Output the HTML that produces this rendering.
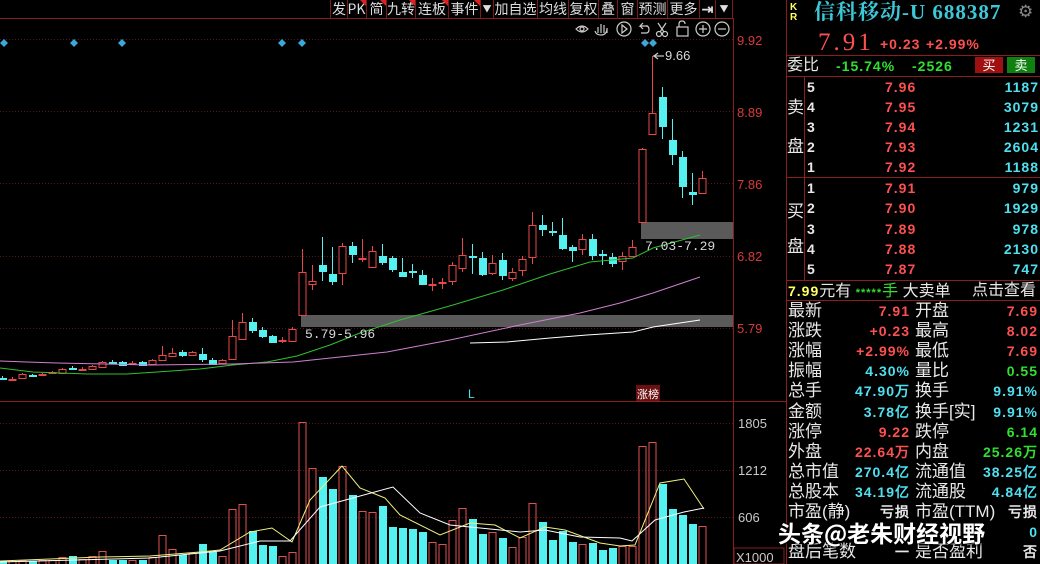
<!DOCTYPE html>
<html><head><meta charset="utf-8">
<style>
html,body{margin:0;padding:0;background:#000;width:1040px;height:564px;overflow:hidden;font-family:"Liberation Sans","Noto Sans CJK SC",sans-serif;}
#wrap{position:relative;width:1040px;height:564px;}
svg{position:absolute;left:0;top:0;}
.t{position:absolute;white-space:nowrap;line-height:1;}
.tb{position:absolute;top:0;height:18px;border-right:1px solid #7a1a1a;color:#ddd;font-size:14px;line-height:18px;text-align:center;font-family:"Noto Sans CJK SC",sans-serif;overflow:hidden}
.tri{position:absolute;top:0;right:0;width:0;height:0;border-top:6px solid #e02020;border-left:6px solid transparent;}
.r{color:#ff5050}.c{color:#4fe0f0}.g{color:#30e030}.w{color:#e8e8e8}.y{color:#ffff60}
.rp{position:absolute;font-size:15px;line-height:20px;font-family:"Liberation Sans","Noto Sans CJK SC",sans-serif;white-space:nowrap}
.num{font-family:"Liberation Sans",sans-serif;font-weight:bold;font-size:14px;letter-spacing:1px}
</style></head><body><div id="wrap">
<svg id="s" width="1040" height="564" xmlns="http://www.w3.org/2000/svg">
<g stroke="#5a1515" stroke-dasharray="1,2" stroke-width="1">
<line x1="0" y1="39.5" x2="733" y2="39.5"/>
<line x1="0" y1="111.5" x2="733" y2="111.5"/>
<line x1="0" y1="183.5" x2="733" y2="183.5"/>
<line x1="0" y1="256.5" x2="733" y2="256.5"/>
<line x1="0" y1="328.5" x2="733" y2="328.5"/>
<line x1="0" y1="423.5" x2="733" y2="423.5"/>
<line x1="0" y1="470.5" x2="733" y2="470.5"/>
<line x1="0" y1="517.5" x2="733" y2="517.5"/>
</g>
<g stroke="#8a1e1e" stroke-width="1">
<line x1="0" y1="18.5" x2="330" y2="18.5"/>
<line x1="330" y1="18.5" x2="733" y2="18.5"/>
<line x1="733.5" y1="18" x2="733.5" y2="564"/>
<line x1="0" y1="401.5" x2="786" y2="401.5"/>
<line x1="786.5" y1="0" x2="786.5" y2="564"/>
</g>
<rect x="301" y="315" width="432" height="12" fill="#5a5a5a"/>
<rect x="641" y="222" width="92" height="17" fill="#5a5a5a"/>
<g id="cand"></g>
<polyline fill="none" stroke="#30c030" stroke-width="1" points="0,368 33,372 87,374 127,374 157,372 200,369 233,365 267,362 297,356 330,345 360,333 400,320 453,305 503,290 550,274 590,262 633,258 653,248 700,235"/>
<polyline fill="none" stroke="#d080d0" stroke-width="1" points="0,361 27,362 57,363 150,365 233,364 293,362 340,357 387,352 450,340 520,325 580,313 620,303 653,293 700,277"/>
<polyline fill="none" stroke="#ffffff" stroke-width="1" points="470,343 507,342 550,338 587,335 633,332 653,327 700,320"/>
<g id="vol"></g>
<polyline fill="none" stroke="#f0f080" stroke-width="1" points="0,561 100,557 150,556 200,552 220,550 250,532 272,528 292,542 310,500 342,466 360,488 385,498 400,515 440,535 470,523 495,525 520,538 545,527 565,530 600,543 620,546 635,545 660,483 684,479 704,509"/>
<polyline fill="none" stroke="#ffffff" stroke-width="1" points="0,562 150,558 220,551 260,541 290,541 320,507 393,487 420,513 450,525 480,528 520,532 545,530 580,537 620,538 632,541 655,520 684,512 704,508"/>
<g fill="#3aa8d8">
<path d="M4 39l4 4-4 4-4-4z"/><path d="M74 39l4 4-4 4-4-4z"/><path d="M122 39l4 4-4 4-4-4z"/><path d="M282 39l4 4-4 4-4-4z"/><path d="M302 39l4 4-4 4-4-4z"/><path d="M645 39l4 4-4 4-4-4z"/><path d="M653 39l4 4-4 4-4-4z"/>
</g>
<g stroke="#ccc" fill="none" stroke-width="1.2">
<line x1="653" y1="56" x2="664" y2="56"/><path d="M658 53l-4 3 4 3"/>
<path d="M576 29q6-6 12 0q-6 6-12 0z"/><circle cx="582" cy="29" r="2"/>
<path d="M598 33v-6m3 6v-9m3 9v-8m3 8v-5q0 7-6 7q-5 0-6-4"/>
<circle cx="624" cy="29" r="7"/><path d="M622 25l5 4-5 4z"/>
<path d="M648 26h-8l3-3m-3 3l3 3"/><path d="M641 33h5q3 0 3-3.5t-3-3.5"/>
<circle cx="659" cy="34" r="2.5"/><circle cx="665" cy="34" r="2.5"/><path d="M660 32l6-9M664 32l-6-9"/>
<rect x="677" y="27" width="11" height="9"/><path d="M679 27v-3q0-3 3-3t3 3"/>
<circle cx="703" cy="29" r="7"/><path d="M699 29h8M703 25v8"/>
<circle cx="722" cy="29" r="7"/><path d="M718 29h8"/>
</g>
<g fill="#d83a3a" font-family="Liberation Sans" font-size="13">
<text x="737" y="45">9.92</text><text x="737" y="117">8.89</text><text x="737" y="189">7.86</text><text x="737" y="261">6.82</text><text x="737" y="333">5.79</text>
</g>
<g fill="#c8c8c8" font-family="Liberation Sans" font-size="13">
<text x="738" y="428">1805</text><text x="738" y="475">1212</text><text x="738" y="522">606</text><text x="736" y="562">X1000</text>
</g>
<rect x="734" y="548" width="50" height="16" fill="none" stroke="#8a1e1e"/>
<g fill="#d8d8d8" font-family="Liberation Mono" font-size="13">
<text x="305" y="338">5.79-5.96</text><text x="645" y="250">7.03-7.29</text><text x="665" y="60" font-family="Liberation Sans">9.66</text>
</g>
<text x="468" y="398" fill="#4fe0f0" font-family="Liberation Sans" font-size="12">L</text>
<rect x="636" y="385" width="24" height="16" fill="#6a1010"/>
<text x="637" y="398" fill="#fff" font-family="Noto Sans CJK SC" font-size="11">涨榜</text>
</svg>

<div class="tb" style="left:330px;width:16px;border-left:1px solid #7a1a1a">发</div>
<div class="tb" style="left:347px;width:19px">PK<i class="tri"></i></div>
<div class="tb" style="left:367px;width:19px">简<i class="tri"></i></div>
<div class="tb" style="left:387px;width:28px">九转<i class="tri"></i></div>
<div class="tb" style="left:416px;width:32px">连板<i class="tri"></i></div>
<div class="tb" style="left:449px;width:31px">事件<i class="tri"></i></div>
<div class="tb" style="left:481px;width:12px;font-size:9px">▼</div>
<div class="tb" style="left:494px;width:43px">加自选</div>
<div class="tb" style="left:538px;width:30px">均线</div>
<div class="tb" style="left:569px;width:29px">复权</div>
<div class="tb" style="left:599px;width:18px">叠</div>
<div class="tb" style="left:618px;width:19px">窗</div>
<div class="tb" style="left:638px;width:29px">预测</div>
<div class="tb" style="left:668px;width:31px">更多</div>
<div class="tb" style="left:700px;width:15px;font-weight:bold">⇥</div>
<div class="tb" style="left:716px;width:16px;font-size:9px">▼</div>

<div class="t y" style="left:790px;top:3px;font-size:10px;font-weight:bold;line-height:10px">K<br>R</div>
<div class="t" style="left:814px;top:2px;font-size:21px;font-weight:bold;letter-spacing:1px;color:#3cc8d8;font-family:'Liberation Serif','Noto Serif CJK SC',serif">信科移动-U 688387</div>
<div class="t" style="left:1018px;top:3px;font-size:17px;color:#888">⚙</div>
<div class="t r" style="left:818px;top:30px;font-size:25px;font-family:'Liberation Serif',serif;letter-spacing:3px">7.91</div>
<div class="t r num" style="left:880px;top:37px;font-size:14px">+0.23</div>
<div class="t r num" style="left:926px;top:37px;font-size:14px">+2.99%</div>
<div style="position:absolute;left:787px;top:55px;width:253px;height:1px;background:#8a1e1e"></div>
<div class="rp w" style="left:787px;top:56px;font-size:16px">委比</div>
<div class="rp g num" style="left:836px;top:56px">-15.74%</div>
<div class="rp g num" style="left:912px;top:56px">-2526</div>
<div class="t" style="left:975px;top:57px;width:28px;height:16px;background:#a01010;color:#fff;font-size:13px;line-height:16px;text-align:center;font-family:'Noto Sans CJK SC'">买</div>
<div class="t" style="left:1007px;top:57px;width:28px;height:16px;background:#108010;color:#fff;font-size:13px;line-height:16px;text-align:center;font-family:'Noto Sans CJK SC'">卖</div>
<div style="position:absolute;left:787px;top:76px;width:253px;height:1px;background:#8a1e1e"></div>
<div style="position:absolute;left:804px;top:77px;width:1px;height:203px;background:#8a1e1e"></div>
<div style="position:absolute;left:787px;top:177px;width:253px;height:1px;background:#8a1e1e"></div>
<div style="position:absolute;left:787px;top:280px;width:253px;height:1px;background:#8a1e1e"></div>
<div style="position:absolute;left:787px;top:300px;width:253px;height:1px;background:#8a1e1e"></div>
<div class="rp w" style="left:787px;top:98px;font-size:17px">卖</div>
<div class="rp w" style="left:787px;top:137px;font-size:17px">盘</div>
<div class="rp w" style="left:787px;top:202px;font-size:17px">买</div>
<div class="rp w" style="left:787px;top:237px;font-size:17px">盘</div>
<div id="ob"></div>
<div class="rp" style="left:788px;top:281px;font-size:16px"><span class="y num">7.99</span><span class="w">元有</span> <span class="g num" style="font-size:11px">*****</span><span class="g">手</span> <span class="w">大卖单</span></div>
<div class="rp w" style="left:972px;top:281px;font-size:16px">点击查看</div>
<div id="st"></div>
<div class="t" style="left:778px;top:521px;font-size:23px;font-weight:bold;color:#fff;font-family:'Noto Sans CJK SC',sans-serif;text-shadow:0 0 3px #000,1px 1px 2px #000">头条@老朱财经视野</div>
</div>
<script>
var NS="http://www.w3.org/2000/svg";
function el(p,t,a){var e=document.createElementNS(NS,t);for(var k in a)e.setAttribute(k,a[k]);p.appendChild(e);return e;}
var C=[[2,378,378,376,380,'c'],[12,379,379,377,381,'r'],[22,374,378,373,379,'r'],[32,375,375,374,376,'c'],[42,374,375,373,376,'r'],[52,372,373,371,374,'r'],[62,369,373,368,374,'r'],[72,368,368,366,370,'c'],[82,369,369,367,371,'r'],[92,366,369,365,370,'r'],[102,362,367,361,368,'r'],[112,362,362,360,364,'c'],[122,362,365,361,366,'c'],[132,363,363,361,365,'r'],[142,362,365,361,366,'c'],[152,360,364,359,365,'r'],[162,355,360,346,361,'r'],[172,353,356,348,357,'r'],[182,352,355,350,357,'c'],[192,352,355,351,356,'r'],[202,354,359,348,362,'c'],[212,360,364,358,365,'c'],[222,360,363,359,364,'r'],[232,336,359,320,360,'r'],[242,322,339,313,340,'r'],[252,322,330,318,333,'c'],[262,330,336,327,338,'c'],[272,336,342,335,343,'c'],[282,340,340,337,343,'r'],[292,329,341,327,342,'r'],[302,272,315,249,316,'r'],[312,281,284,265,290,'r'],[322,265,271,237,281,'c'],[332,274,281,247,285,'c'],[342,246,273,243,285,'r'],[352,246,254,242,263,'c'],[362,258,258,239,262,'r'],[372,251,267,246,268,'r'],[382,256,262,244,265,'c'],[392,258,269,256,272,'c'],[402,272,276,258,277,'c'],[412,271,271,264,278,'c'],[422,275,284,270,285,'c'],[432,284,284,278,291,'r'],[442,282,282,278,289,'r'],[452,265,281,262,285,'r'],[462,255,268,238,272,'r'],[472,256,256,244,274,'c'],[482,258,274,252,276,'c'],[492,263,273,255,275,'r'],[502,260,275,253,280,'c'],[512,272,278,268,281,'r'],[522,259,270,256,276,'r'],[532,225,257,212,264,'r'],[542,225,229,215,236,'c'],[552,231,231,222,236,'c'],[562,235,248,218,250,'c'],[572,247,250,245,262,'c'],[582,239,249,234,255,'r'],[592,239,255,234,260,'c'],[602,254,254,250,265,'c'],[612,257,263,253,267,'c'],[622,256,261,252,270,'r'],[632,247,256,240,257,'r'],[642,149,222,148,223,'r'],[652,113,134,56,135,'r'],[662,97,126,87,139,'c'],[672,140,154,119,165,'c'],[682,157,186,151,198,'c'],[692,192,194,173,205,'c'],[702,178,193,171,194,'r']];
var g=document.getElementById('cand');
C.forEach(function(d){var x=d[0],col=d[5]=='r'?'#e84848':'#55f0f0';
 el(g,'line',{x1:x+.5,x2:x+.5,y1:d[3],y2:d[4],stroke:col});
 var h=Math.max(1,d[2]-d[1]);
 if(d[5]=='r')el(g,'rect',{x:x-3,y:d[1]+.5,width:7,height:h,fill:'#000',stroke:col});
 else el(g,'rect',{x:x-3,y:d[1],width:8,height:h+1,fill:col});
});
var V=[[2,561,'c'],[12,561,'r'],[22,560,'r'],[32,561,'c'],[42,560,'r'],[52,560,'r'],[62,557,'r'],[72,556,'c'],[82,559,'r'],[92,556,'r'],[102,551,'r'],[112,560,'c'],[122,560,'c'],[132,560,'r'],[142,560,'c'],[152,557,'r'],[162,535,'r'],[172,549,'r'],[182,555,'c'],[192,553,'r'],[202,544,'c'],[212,552,'c'],[222,556,'r'],[232,509,'r'],[242,504,'r'],[252,531,'c'],[262,545,'c'],[272,546,'c'],[282,556,'r'],[292,552,'r'],[302,422,'r'],[312,468,'r'],[322,477,'c'],[332,489,'c'],[342,466,'r'],[352,495,'c'],[362,511,'r'],[372,512,'r'],[382,506,'c'],[392,527,'c'],[402,528,'c'],[412,529,'c'],[422,532,'c'],[432,542,'r'],[442,544,'r'],[452,520,'r'],[462,508,'r'],[472,519,'c'],[482,534,'c'],[492,532,'r'],[502,538,'c'],[512,547,'r'],[522,537,'r'],[532,503,'r'],[542,522,'c'],[552,540,'c'],[562,531,'c'],[572,542,'c'],[582,544,'r'],[592,543,'c'],[602,550,'c'],[612,548,'c'],[622,546,'r'],[632,546,'r'],[642,446,'r'],[652,442,'r'],[662,484,'c'],[672,509,'c'],[682,515,'c'],[692,524,'c'],[702,526,'r']];
var gv=document.getElementById('vol');
V.forEach(function(d){var x=d[0];
 if(d[2]=='r')el(gv,'rect',{x:x-3,y:d[1]+.5,width:7,height:570-d[1],fill:'none',stroke:'#e05050'});
 else el(gv,'rect',{x:x-3,y:d[1],width:8,height:570-d[1],fill:'#55f0f0'});
});
var ob='',sell=[['5','7.96','1187'],['4','7.95','3079'],['3','7.94','1231'],['2','7.93','2604'],['1','7.92','1188']],buy=[['1','7.91','979'],['2','7.90','1929'],['3','7.89','978'],['4','7.88','2130'],['5','7.87','747']];
function row(a,top){return '<div class="rp w num" style="left:807px;top:'+top+'px">'+a[0]+'</div><div class="rp r num" style="left:885px;top:'+top+'px">'+a[1]+'</div><div class="rp c num" style="right:1px;top:'+top+'px">'+a[2]+'</div>';}
sell.forEach(function(a,i){ob+=row(a,77+i*20);});
buy.forEach(function(a,i){ob+=row(a,178+i*20.3);});
document.getElementById('ob').innerHTML=ob;
var S=[['最新','7.91','r','开盘','7.69','r'],['涨跌','+0.23','r','最高','8.02','r'],['涨幅','+2.99%','r','最低','7.69','r'],['振幅','4.30%','c','量比','0.55','g'],['总手','47.90万','c','换手','9.91%','c'],['金额','3.78亿','c','换手[实]','9.91%','c'],['涨停','9.22','r','跌停','6.14','g'],['外盘','22.64万','r','内盘','25.26万','g'],['总市值','270.4亿','c','流通值','38.25亿','c'],['总股本','34.19亿','c','流通股','4.84亿','c'],['市盈(静)','亏损','w','市盈(TTM)','亏损','w'],['','','w','','0','c'],['盘后笔数','一','w','是否盈利','否','w']];
var st='';
S.forEach(function(a,i){var t=301+i*20.1;
 st+='<div class="rp w" style="left:788px;top:'+t+'px;font-size:17px">'+a[0]+'</div>';
 st+='<div class="rp '+a[2]+' num" style="right:130px;top:'+t+'px">'+a[1]+'</div>';
 st+='<div class="rp w" style="left:915px;top:'+t+'px;font-size:17px">'+a[3]+'</div>';
 st+='<div class="rp '+a[5]+' num" style="right:2px;top:'+t+'px">'+a[4]+'</div>';});
document.getElementById('st').innerHTML=st;
</script>
</body></html>
